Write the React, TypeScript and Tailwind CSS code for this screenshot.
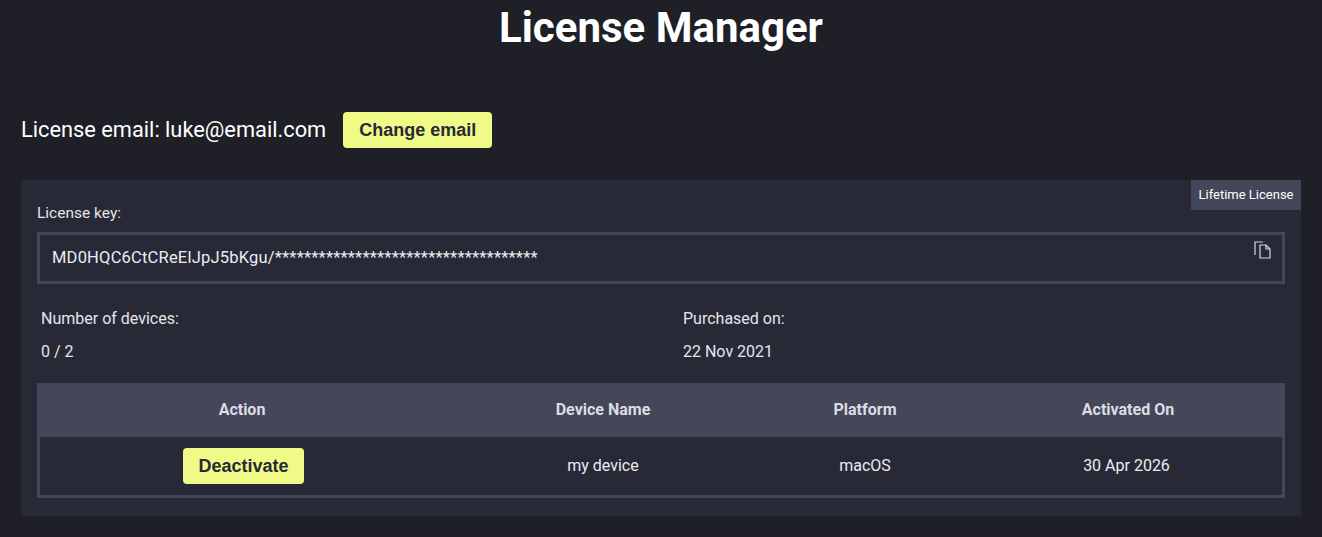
import React from "react";

export default function App() {
  return (
    <div className="w-[1322px] h-[537px] bg-[#1e1f27] text-white overflow-hidden" style={{ fontFamily: "Roboto, 'Liberation Sans', sans-serif" }}>
      <h1 className="text-center text-[42px] font-bold leading-[56px]">License Manager</h1>
      <div className="flex items-center pl-[21px] mt-[56px] h-[36px]">
        <span className="text-[21.8px]">License email: luke@email.com</span>
        <button className="ml-[17px] bg-[#f0fa87] text-[#272936] font-bold text-[18px] rounded-[4px] px-[13px] w-[149px] h-[36px]" style={{ fontFamily: "'Liberation Sans', Arial, sans-serif" }}>Change email</button>
      </div>
      <div className="relative mx-[21px] mt-[32px] bg-[#272936] pt-[23px] px-[16px] pb-[18px] w-[1280px]">
        <div className="absolute top-0 right-0 bg-[#444659] text-[13px] w-[110px] h-[30px] flex items-center justify-center">Lifetime License</div>
        <div className="text-[15.5px] text-[#e5e5ea] h-[20px] leading-[20px]">License key:</div>
        <div className="relative mt-[9px] border-[3px] border-[#444659] h-[52px] flex items-center pl-[12px] text-[16.5px] text-[#ececf0] tracking-[0.2px]">
          MD0HQC6CtCReElJpJ5bKgu/************************************
          <svg className="absolute right-[10px] top-[6px]" width="18" height="18" viewBox="0 0 18 18" fill="none" stroke="#d8d8de" strokeWidth="1.2">
            <path d="M1 14V1h8" />
            <path d="M6 4h6l4 4v9H6z" />
            <path d="M12 4v4h4" />
          </svg>
        </div>
        <div className="grid grid-cols-[642px_1fr] mt-[25px] text-[16px] text-[#e5e5ea] pl-[4px]">
          <div>
            <div className="leading-[20px]">Number of devices:</div>
            <div className="leading-[20px] mt-[13px]">0 / 2</div>
          </div>
          <div>
            <div className="leading-[20px]">Purchased on:</div>
            <div className="leading-[20px] mt-[13px]">22 Nov 2021</div>
          </div>
        </div>
        <div className="mt-[21px] text-[16px]">
          <div className="grid grid-cols-[410px_312px_212px_1fr] bg-[#444659] h-[54px] items-center text-center font-bold text-[#dcdce2]">
            <div>Action</div><div>Device Name</div><div>Platform</div><div>Activated On</div>
          </div>
          <div className="grid grid-cols-[407px_312px_212px_1fr] border-[3px] border-t-0 border-[#444659] h-[61px] items-center text-center text-[#ececf0]">
            <div>
              <button className="bg-[#f0fa87] text-[#272936] font-bold text-[18px] rounded-[4px] w-[121px] h-[36px]" style={{ fontFamily: "'Liberation Sans', Arial, sans-serif" }}>Deactivate</button>
            </div>
            <div>my device</div><div>macOS</div><div>30 Apr 2026</div>
          </div>
        </div>
      </div>
    </div>
  );
}
